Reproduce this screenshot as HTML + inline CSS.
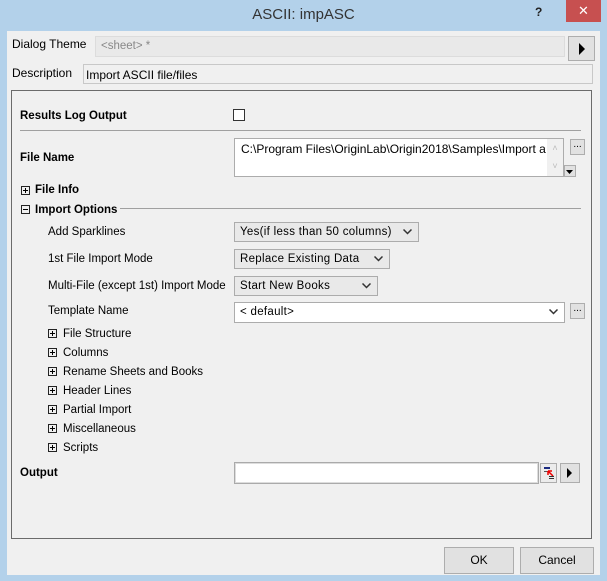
<!DOCTYPE html>
<html><head><style>
*{margin:0;padding:0;box-sizing:border-box}
body{width:607px;height:581px;background:#b3d1ea;font-family:"Liberation Sans",sans-serif;font-size:11.5px;color:#000;position:relative;overflow:hidden}
.a{position:absolute;white-space:nowrap}
.b{font-weight:bold}
.combo{position:absolute;background:#e9e9e9;border:1px solid #acacac;padding:3px 0 0 5px;font-size:11.5px;letter-spacing:0.3px}
.combo svg{position:absolute;right:6px;top:6px}
.tb{position:absolute;width:9px;height:9px;border:1px solid #222}
.tb:before{content:"";position:absolute;left:1px;top:3px;width:5px;height:1px;background:#000}
.tb.p:after{content:"";position:absolute;left:3px;top:1px;width:1px;height:5px;background:#000}
.btn{position:absolute;background:#e1e1e1;border:1px solid #adadad;text-align:center}
</style></head><body>
<div class="a" style="left:0;top:0;width:607px;height:30px;font-size:15px;color:#333;text-align:center;line-height:30px">ASCII: impASC</div>
<div class="a b" style="left:535px;top:5px;font-size:12px;color:#222">?</div>
<div class="a" style="left:566px;top:0;width:35px;height:22px;background:#c75050;color:#fff;text-align:center;font-size:13px;line-height:22px">✕</div>
<div class="a" style="left:7px;top:31px;width:593px;height:544px;background:#f0f0f0"></div>

<div class="a" style="left:12px;top:37px;font-size:12px">Dialog Theme</div>
<div class="a" style="left:95px;top:36px;width:470px;height:21px;background:#e9e9e9;border:1px solid #dcdcdc;color:#888;padding:3px 0 0 5px">&lt;sheet&gt; *</div>
<div class="btn" style="left:568px;top:36px;width:27px;height:25px"><svg width="8" height="12" style="margin-top:6px"><path d="M1 0L7 6L1 12Z" fill="#000"/></svg></div>
<div class="a" style="left:12px;top:66px;font-size:12px">Description</div>
<div class="a" style="left:83px;top:64px;width:510px;height:20px;background:#f0f0f0;border:1px solid #c8c8c8;padding:3px 0 0 2px;font-size:12px">Import ASCII file/files</div>

<div class="a" style="left:11px;top:90px;width:581px;height:449px;border:1px solid #6b6b6b"></div>
<div class="a b" style="left:20px;top:110px">Results Log Output</div>
<div class="a" style="left:233px;top:109px;width:12px;height:12px;background:#fff;border:1px solid #333"></div>
<div class="a" style="left:20px;top:130px;width:561px;height:1px;background:#a0a0a0"></div>

<div class="a b" style="left:20px;top:152px">File Name</div>
<div class="a" style="left:234px;top:138px;width:330px;height:39px;background:#fff;border:1px solid #acacac;padding:3px 0 0 6px;font-size:12px;overflow:hidden">C:\Program Files\OriginLab\Origin2018\Samples\Import a</div>
<div class="a" style="left:547px;top:139px;width:16px;height:37px;background:#f0f0f0;color:#bbb;font-size:9px;text-align:center;line-height:18px">˄<br>˅</div>
<div class="btn" style="left:570px;top:139px;width:15px;height:16px;font-size:10px;line-height:10px">...</div>
<div class="btn" style="left:564px;top:165px;width:12px;height:12px"><svg width="8" height="5" style="margin-top:3px"><path d="M0 0H7L3.5 4Z" fill="#000"/></svg></div>

<div class="tb p" style="left:21px;top:186px"></div><div class="a b" style="left:35px;top:184px">File Info</div>
<div class="tb" style="left:21px;top:205px"></div><div class="a b" style="left:35px;top:204px">Import Options</div>
<div class="a" style="left:120px;top:208px;width:461px;height:1px;background:#a0a0a0"></div>

<div class="a" style="left:48px;top:226px">Add Sparklines</div>
<div class="combo" style="left:234px;top:222px;width:185px;height:20px">Yes(if less than 50 columns)<svg width="9" height="6"><path d="M0.5 0.5L4.5 4.5L8.5 0.5" stroke="#333" stroke-width="1.5" fill="none"/></svg></div>
<div class="a" style="left:48px;top:253px">1st File Import Mode</div>
<div class="combo" style="left:234px;top:249px;width:156px;height:20px">Replace Existing Data<svg width="9" height="6"><path d="M0.5 0.5L4.5 4.5L8.5 0.5" stroke="#333" stroke-width="1.5" fill="none"/></svg></div>
<div class="a" style="left:48px;top:280px">Multi-File (except 1st) Import Mode</div>
<div class="combo" style="left:234px;top:276px;width:144px;height:20px">Start New Books<svg width="9" height="6"><path d="M0.5 0.5L4.5 4.5L8.5 0.5" stroke="#333" stroke-width="1.5" fill="none"/></svg></div>
<div class="a" style="left:48px;top:305px">Template Name</div>
<div class="combo" style="left:234px;top:302px;width:331px;height:21px;background:#fff">&lt; default&gt;<svg width="9" height="6"><path d="M0.5 0.5L4.5 4.5L8.5 0.5" stroke="#333" stroke-width="1.5" fill="none"/></svg></div>
<div class="btn" style="left:570px;top:303px;width:15px;height:16px;font-size:10px;line-height:10px">...</div>

<div class="tb p" style="left:48px;top:329px"></div><div class="a" style="left:63px;top:328px">File Structure</div>
<div class="tb p" style="left:48px;top:348px"></div><div class="a" style="left:63px;top:347px">Columns</div>
<div class="tb p" style="left:48px;top:367px"></div><div class="a" style="left:63px;top:366px">Rename Sheets and Books</div>
<div class="tb p" style="left:48px;top:386px"></div><div class="a" style="left:63px;top:385px">Header Lines</div>
<div class="tb p" style="left:48px;top:405px"></div><div class="a" style="left:63px;top:404px">Partial Import</div>
<div class="tb p" style="left:48px;top:424px"></div><div class="a" style="left:63px;top:423px">Miscellaneous</div>
<div class="tb p" style="left:48px;top:443px"></div><div class="a" style="left:63px;top:442px">Scripts</div>

<div class="a b" style="left:20px;top:467px">Output</div>
<div class="a" style="left:234px;top:462px;width:305px;height:22px;background:#fff;border:1px solid #aaa;box-shadow:inset 0 0 0 1px #ddd"></div>
<div class="btn" style="left:540px;top:463px;width:17px;height:20px;background:#ececec"><svg width="12" height="14" style="margin-top:2px"><rect x="1" y="1" width="6" height="2" fill="#1a2a80"/><rect x="1" y="5" width="4" height="1" fill="#555"/><path d="M5 5L10 10M5 5V9M5 5H9" stroke="#e00" stroke-width="1.5"/><rect x="6" y="10" width="5" height="1" fill="#333"/><rect x="6" y="12" width="5" height="1" fill="#333"/></svg></div>
<div class="btn" style="left:560px;top:463px;width:20px;height:20px"><svg width="6" height="10" style="margin-top:4px"><path d="M0 0L5 5L0 10Z" fill="#000"/></svg></div>

<div class="btn" style="left:444px;top:547px;width:70px;height:27px;line-height:24px;font-size:12px">OK</div>
<div class="btn" style="left:520px;top:547px;width:74px;height:27px;line-height:24px;font-size:12px">Cancel</div>
</body></html>
